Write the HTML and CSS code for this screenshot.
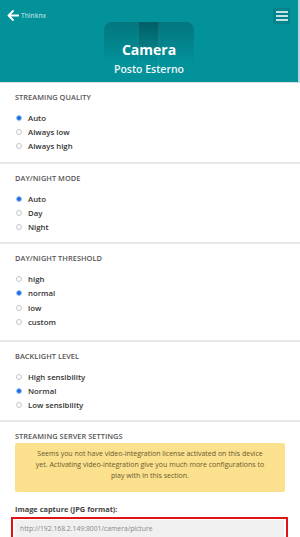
FILE: index.html
```html
<!DOCTYPE html>
<html>
<head>
<meta charset="utf-8">
<link rel="stylesheet" href="styles.css">
</head>
<body>
<div class="page">
  <header class="header">
    <div class="topbar">
      <a class="back">
        <svg width="12" height="11" viewBox="0 0 12 11"><path d="M6 1 L1.5 5.5 L6 10 M1.5 5.5 H11.5" fill="none" stroke="#fff" stroke-width="1.8" stroke-linecap="round" stroke-linejoin="round"/></svg>
        <span>Thinknx</span>
      </a>
      <div class="menu">
        <span></span><span></span><span></span>
      </div>
    </div>
    <div class="card">
      <div class="thumb"><div class="band"></div></div>
      <div class="title">Camera</div>
    </div>
    <div class="subtitle">Posto Esterno</div>
  </header>

  <section class="sec">
    <div class="label">STREAMING QUALITY</div>
    <ul class="opts">
      <li><i class="radio on"></i>Auto</li>
      <li><i class="radio"></i>Always low</li>
      <li><i class="radio"></i>Always high</li>
    </ul>
  </section>

  <section class="sec">
    <div class="label">DAY/NIGHT MODE</div>
    <ul class="opts">
      <li><i class="radio on"></i>Auto</li>
      <li><i class="radio"></i>Day</li>
      <li><i class="radio"></i>Night</li>
    </ul>
  </section>

  <section class="sec four">
    <div class="label">DAY/NIGHT THRESHOLD</div>
    <ul class="opts">
      <li><i class="radio"></i>high</li>
      <li><i class="radio on"></i>normal</li>
      <li><i class="radio"></i>low</li>
      <li><i class="radio"></i>custom</li>
    </ul>
  </section>

  <section class="sec">
    <div class="label">BACKLIGHT LEVEL</div>
    <ul class="opts">
      <li><i class="radio"></i>High sensibility</li>
      <li><i class="radio on"></i>Normal</li>
      <li><i class="radio"></i>Low sensibility</li>
    </ul>
  </section>

  <section class="sec last">
    <div class="label">STREAMING SERVER SETTINGS</div>
    <div class="notice">Seems you not have video-integration license activated on this device yet. Activating video-integration give you much more configurations to play with in this section.</div>
    <div class="field-label">Image capture (JPG format):</div>
    <div class="field">
      <div class="input">http://192.168.2.149:8001/camera/picture</div>
    </div>
  </section>
</div>
</body>
</html>
```

FILE: styles.css
```css
* { box-sizing: border-box; }
html, body { margin: 0; padding: 0; background: #fff; }
body {
  width: 300px;
  height: 537px;
  overflow: hidden;
  font-family: "Open Sans", "DejaVu Sans", sans-serif;
  color: #444;
}
.page { width: 300px; }

.header {
  height: 83px;
  background: #03919a;
  border-right: 2px solid #bcd6dc;
  border-bottom: 1px solid #d8e0e3;
  display: flex;
  flex-direction: column;
  align-items: center;
}
.topbar {
  align-self: stretch;
  display: flex;
  justify-content: space-between;
  align-items: flex-start;
  padding: 9px 8px 0 7px;
  height: 22px;
}
.back {
  display: flex;
  align-items: center;
  gap: 2px;
  color: #a9dadc;
  font-size: 6.5px;
  font-weight: 600;
  padding-top: 1px;
}
.menu {
  width: 17px;
  height: 16px;
  background: rgba(0, 60, 70, 0.16);
  display: flex;
  flex-direction: column;
  justify-content: center;
  align-items: center;
  gap: 2px;
  margin-top: -1px;
}
.menu span {
  display: block;
  width: 12px;
  height: 2px;
  background: #c4e3e5;
}
.card {
  margin-top: 0;
  width: 90px;
  height: 40px;
  border-radius: 8px 8px 0 0;
  position: relative;
  display: flex;
  justify-content: center;
  align-items: flex-end;
  padding-bottom: 4px;
}
.thumb {
  position: absolute;
  inset: 0;
  border-radius: 8px 8px 0 0;
  background: linear-gradient(to bottom, rgba(0, 50, 55, 0.28), rgba(0, 50, 55, 0.08) 75%, rgba(0, 50, 55, 0));
  overflow: hidden;
}
.band {
  position: absolute;
  left: 34px;
  width: 21px;
  top: 0;
  bottom: 0;
  background: linear-gradient(to bottom, rgba(0, 40, 45, 0.3), rgba(0, 40, 45, 0.05) 80%, rgba(0, 40, 45, 0));
  border-left: 1px solid rgba(255, 255, 255, 0.08);
  border-right: 1px solid rgba(255, 255, 255, 0.08);
}
.title {
  position: relative;
  color: #fff;
  font-size: 14px;
  font-weight: 700;
  line-height: 16px;
}
.subtitle {
  margin-top: 1px;
  color: #eef8f8;
  font-size: 10.5px;
  font-weight: 600;
  line-height: 13px;
}

.sec {
  padding: 9px 15px 8px;
  border-bottom: 2px solid #e8e8e8;
}
.sec.four { padding-bottom: 11px; }
.label {
  font-size: 7.4px;
  font-weight: 600;
  color: #555;
  line-height: 10px;
  letter-spacing: 0.05px;
}
.opts {
  list-style: none;
  margin: 9px 0 0;
  padding: 0 0 0 1px;
}
.opts li {
  display: flex;
  align-items: center;
  height: 14.2px;
  font-size: 7.8px;
  font-weight: 600;
  color: #333;
}
.radio {
  width: 6px;
  height: 6px;
  border-radius: 50%;
  border: 1px solid #c6c6c6;
  background: #fff;
  margin-right: 6px;
  flex: none;
}
.radio.on {
  border: 1px solid #8db8f0;
  background: radial-gradient(circle, #1a6fe0 0 2px, #8db8f0 2.3px);
}

.sec.last { border-bottom: none; padding-bottom: 0; }
.notice {
  margin-top: 2px;
  background: #fbe08e;
  border-radius: 2px;
  height: 49px;
  width: 270px;
  padding: 5px 18px 0;
  text-align: center;
  font-size: 7px;
  line-height: 11px;
  color: #6a5a2e;
}
.field-label {
  margin-top: 12px;
  font-size: 7.4px;
  font-weight: 700;
  color: #444;
  line-height: 10px;
}
.field {
  margin: 3px 0 0 -4px;
  width: 277px;
  height: 22px;
  border: 2px solid #e01414;
  padding: 1px 2px 0;
}
.input {
  background: #f0f0f0;
  height: 17px;
  font-size: 6.8px;
  color: #888;
  line-height: 17px;
  padding-left: 5px;
}
```
